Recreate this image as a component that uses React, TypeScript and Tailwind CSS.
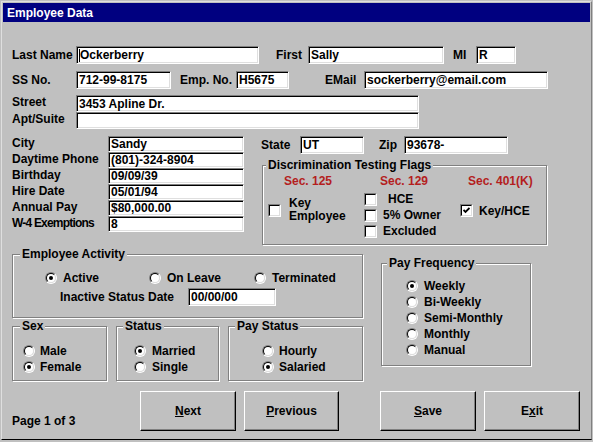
import React from "react";

function Field({ className, children }: { className: string; children?: React.ReactNode }) {
  return (
    <div
      className={`flex items-center bg-white border border-t-[#808080] border-l-[#808080] border-r-white border-b-white shadow-[inset_1px_1px_0_#000,inset_-1px_-1px_0_#dfdfdf] pl-[2px] whitespace-nowrap overflow-hidden ${className}`}
    >
      {children}
    </div>
  );
}

function Radio({ checked }: { checked?: boolean }) {
  return (
    <span className="inline-block shrink-0 w-[12px] h-[12px] rounded-full border border-t-[#808080] border-l-[#808080] border-r-white border-b-white">
      <span className="flex w-full h-full rounded-full bg-white border border-t-black border-l-black border-r-[#dfdfdf] border-b-[#dfdfdf] items-center justify-center">
        {checked && <span className="block w-[4px] h-[4px] rounded-full bg-black" />}
      </span>
    </span>
  );
}

function Check({ checked }: { checked?: boolean }) {
  return (
    <span className="inline-block shrink-0 w-[13px] h-[13px] border border-t-[#808080] border-l-[#808080] border-r-white border-b-white">
      <span className="flex w-full h-full bg-white border border-t-black border-l-black border-r-[#dfdfdf] border-b-[#dfdfdf] items-center justify-center">
        {checked && (
          <svg width="7" height="7" viewBox="0 0 7 7">
            <polyline points="0.5,3 2.5,5 6.5,1" fill="none" stroke="#000" strokeWidth="1.8" />
          </svg>
        )}
      </span>
    </span>
  );
}

function Btn({ className, children }: { className: string; children: React.ReactNode }) {
  return (
    <button
      className={`h-[40px] bg-[#c0c0c0] border border-t-white border-l-white border-r-black border-b-black shadow-[inset_-1px_-1px_0_#808080] font-bold text-[12px] ${className}`}
    >
      {children}
    </button>
  );
}

const fs =
  "border border-[#808080] shadow-[inset_1px_1px_0_#fff,1px_1px_0_#fff]";
const lg = "px-[2px] bg-[#c0c0c0] leading-[14px]";

export default function App() {
  return (
    <div className="w-[593px] h-[442px] bg-[#c0c0c0] overflow-hidden text-black text-[12px] font-bold leading-[14px] font-['Liberation_Sans',Arial,sans-serif]">
      <div className="ml-[1px] mt-[1px] w-[591px] h-[439px] border border-t-[#dfdfdf] border-l-[#dfdfdf] border-r-[#808080] border-b-black">
        {/* Title bar */}
        <div className="mx-[1px] mt-[1px] h-[19px] bg-[#000080] text-white flex items-center pl-[4px]">
          Employee Data
        </div>

        <div className="pl-[10px]">
          {/* Name row */}
          <div className="mt-[24px] flex items-center h-[18px]">
            <span className="w-[64px]">Last Name</span>
            <Field className="w-[183px] h-[18px]">
              <span className="w-[1px] h-[13px] bg-black" />
              Ockerberry
            </Field>
            <span className="ml-[17px] w-[32px]">First</span>
            <Field className="w-[136px] h-[18px]">Sally</Field>
            <span className="ml-[9px] w-[23px]">MI</span>
            <Field className="w-[40px] h-[18px]">R</Field>
          </div>

          {/* SS row */}
          <div className="mt-[7px] flex items-center h-[18px]">
            <span className="w-[64px]">SS No.</span>
            <Field className="w-[95px] h-[18px]">712-99-8175</Field>
            <span className="ml-[9px] w-[56px]">Emp. No.</span>
            <Field className="w-[53px] h-[18px]">H5675</Field>
            <span className="ml-[36px] w-[39px]">EMail</span>
            <Field className="w-[184px] h-[18px]">sockerberry@email.com</Field>
          </div>

          {/* Address */}
          <div className="mt-[6px] flex">
            <div className="w-[64px] flex flex-col">
              <span className="h-[17px]">Street</span>
              <span className="h-[17px]">Apt/Suite</span>
            </div>
            <div className="flex flex-col">
              <Field className="w-[343px] h-[17px]">3453 Apline Dr.</Field>
              <Field className="w-[343px] h-[17px]" />
            </div>
          </div>

          {/* Middle */}
          <div className="mt-[7px] flex items-start">
            <div className="flex">
              <div className="w-[96px] flex flex-col">
                <span className="h-[16px]">City</span>
                <span className="h-[16px]">Daytime Phone</span>
                <span className="h-[16px]">Birthday</span>
                <span className="h-[16px]">Hire Date</span>
                <span className="h-[16px]">Annual Pay</span>
                <span className="h-[16px] whitespace-nowrap tracking-[-0.8px]">W-4 Exemptions</span>
              </div>
              <div className="flex flex-col">
                <Field className="w-[136px] h-[16px]">Sandy</Field>
                <Field className="w-[136px] h-[16px]">(801)-324-8904</Field>
                <Field className="w-[136px] h-[16px]">09/09/39</Field>
                <Field className="w-[136px] h-[16px]">05/01/94</Field>
                <Field className="w-[136px] h-[16px]">$80,000.00</Field>
                <Field className="w-[136px] h-[16px]">8</Field>
              </div>
            </div>

            <div className="ml-[17px] flex flex-col">
              <div className="flex items-center h-[18px]">
                <span className="w-[39px]">State</span>
                <Field className="w-[64px] h-[18px]">UT</Field>
                <span className="ml-[15px] w-[25px]">Zip</span>
                <Field className="w-[104px] h-[18px]">93678-</Field>
              </div>

              <fieldset className={`mt-[4px] ml-[1px] w-[285px] pt-[2px] pb-[5px] ${fs}`}>
                <legend className={`ml-[3px] ${lg}`}>Discrimination Testing Flags</legend>
                <div className="flex">
                  <div className="w-[96px] flex flex-col">
                    <span className="pl-[21px] text-[#b41e1e]">Sec. 125</span>
                    <div className="mt-[9px] pl-[5px] flex items-center">
                      <Check />
                      <span className="ml-[8px] leading-[13px]">
                        Key
                        <br />
                        Employee
                      </span>
                    </div>
                  </div>
                  <div className="w-[96px] flex flex-col">
                    <span className="pl-[21px] text-[#b41e1e]">Sec. 129</span>
                    <div className="mt-[3px] flex flex-col">
                      <div className="h-[16px] pl-[5px] flex items-center">
                        <Check />
                        <span className="ml-[11px]">HCE</span>
                      </div>
                      <div className="h-[16px] pl-[5px] flex items-center">
                        <Check />
                        <span className="ml-[6px]">5% Owner</span>
                      </div>
                      <div className="h-[16px] pl-[5px] flex items-center">
                        <Check />
                        <span className="ml-[6px]">Excluded</span>
                      </div>
                    </div>
                  </div>
                  <div className="flex flex-col">
                    <span className="pl-[13px] text-[#b41e1e]">Sec. 401(K)</span>
                    <div className="mt-[16px] h-[13px] pl-[5px] flex items-center">
                      <Check checked />
                      <span className="ml-[6px]">Key/HCE</span>
                    </div>
                  </div>
                </div>
              </fieldset>
            </div>
          </div>

          {/* Lower */}
          <div className="mt-[2px] flex items-start">
            <div className="w-[351px] flex flex-col">
              <fieldset className={`w-[351px] pb-[11px] ${fs}`}>
                <legend className={`ml-[7px] ${lg}`}>Employee Activity</legend>
                <div className="mt-[9px] h-[16px] pl-[32px] flex items-center">
                  <div className="w-[104px] flex items-center">
                    <Radio checked />
                    <span className="ml-[6px]">Active</span>
                  </div>
                  <div className="w-[105px] flex items-center">
                    <Radio />
                    <span className="ml-[6px]">On Leave</span>
                  </div>
                  <div className="flex items-center">
                    <Radio />
                    <span className="ml-[6px]">Terminated</span>
                  </div>
                </div>
                <div className="mt-[2px] pl-[47px] flex items-center">
                  <span className="w-[128px]">Inactive Status Date</span>
                  <Field className="w-[88px] h-[18px]">00/00/00</Field>
                </div>
              </fieldset>

              <div className="mt-[1px] flex gap-[9px]">
                <fieldset className={`w-[95px] pb-[5px] ${fs}`}>
                  <legend className={`ml-[7px] ${lg}`}>Sex</legend>
                  <div className="mt-[10px] pl-[10px] flex flex-col">
                    <div className="h-[16px] flex items-center">
                      <Radio />
                      <span className="ml-[5px]">Male</span>
                    </div>
                    <div className="h-[16px] flex items-center">
                      <Radio checked />
                      <span className="ml-[5px]">Female</span>
                    </div>
                  </div>
                </fieldset>
                <fieldset className={`w-[103px] pb-[5px] ${fs}`}>
                  <legend className={`ml-[6px] ${lg}`}>Status</legend>
                  <div className="mt-[10px] pl-[17px] flex flex-col">
                    <div className="h-[16px] flex items-center">
                      <Radio checked />
                      <span className="ml-[6px]">Married</span>
                    </div>
                    <div className="h-[16px] flex items-center">
                      <Radio />
                      <span className="ml-[6px]">Single</span>
                    </div>
                  </div>
                </fieldset>
                <fieldset className={`w-[135px] pb-[5px] ${fs}`}>
                  <legend className={`ml-[6px] ${lg}`}>Pay Status</legend>
                  <div className="mt-[10px] pl-[33px] flex flex-col">
                    <div className="h-[16px] flex items-center">
                      <Radio />
                      <span className="ml-[5px]">Hourly</span>
                    </div>
                    <div className="h-[16px] flex items-center">
                      <Radio checked />
                      <span className="ml-[5px]">Salaried</span>
                    </div>
                  </div>
                </fieldset>
              </div>
            </div>

            <fieldset className={`ml-[18px] mt-[9px] w-[150px] pb-[7px] ${fs}`}>
              <legend className={`ml-[5px] ${lg}`}>Pay Frequency</legend>
              <div className="mt-[8px] pl-[24px] flex flex-col">
                {["Weekly", "Bi-Weekly", "Semi-Monthly", "Monthly", "Manual"].map((t, i) => (
                  <div key={t} className="h-[16px] flex items-center">
                    <Radio checked={i === 0} />
                    <span className="ml-[6px]">{t}</span>
                  </div>
                ))}
              </div>
            </fieldset>
          </div>

          {/* Bottom row */}
          <div className="mt-[10px] flex items-end">
            <span className="w-[128px] mb-[3px]">Page 1 of 3</span>
            <Btn className="w-[96px]">
              <span className="underline">N</span>ext
            </Btn>
            <Btn className="ml-[8px] w-[95px]">
              <span className="underline">P</span>revious
            </Btn>
            <Btn className="ml-[41px] w-[96px]">
              <span className="underline">S</span>ave
            </Btn>
            <Btn className="ml-[8px] w-[96px]">
              E<span className="underline">x</span>it
            </Btn>
          </div>
        </div>
      </div>
    </div>
  );
}
